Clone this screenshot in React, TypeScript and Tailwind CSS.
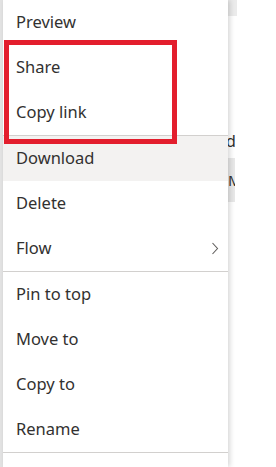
import React from 'react';

const groups = [
  ['Preview', 'Share', 'Copy link'],
  ['Download', 'Delete', 'Flow'],
  ['Pin to top', 'Move to', 'Copy to', 'Rename'],
];

const Chevron = () => (
  <svg width="8" height="13" viewBox="0 0 8 13" fill="none" className="text-[#605e5c]">
    <path d="M1.5 1 L6.5 6.5 L1.5 12" stroke="currentColor" strokeWidth="1.1" />
  </svg>
);

const MenuItem = ({ label }: { label: string }) => (
  <div
    className={
      'h-[45px] flex items-center justify-between pl-[13px] pr-[9px] text-[16.5px] text-[#323130] ' +
      (label === 'Download' ? 'bg-[#f3f2f1]' : '')
    }
  >
    <span>{label}</span>
    {label === 'Flow' && <Chevron />}
  </div>
);

export default function App() {
  return (
    <div
      className="w-[276px] h-[467px] bg-white flex overflow-hidden relative"
      style={{ fontFamily: '"Noto Sans", "Open Sans", sans-serif' }}
    >
      <div className="w-[3px] bg-[#e3e3e3] shrink-0" />

      <div className="w-[225px] shrink-0 bg-white flex flex-col z-10 shadow-[2px_0_5px_rgba(0,0,0,0.16)]">
        {groups.map((g, i) => (
          <div key={i} className="border-b border-[#d2d0ce]">
            {g.map((label) => (
              <MenuItem key={label} label={label} />
            ))}
          </div>
        ))}
      </div>

      <div className="flex-1 flex flex-col text-[16px] text-[#323130]">
        <div className="w-[9px] h-[16px] bg-[#ebebeb]" />
        <div className="h-[112px]" />
        <div className="h-[26px] leading-[26px] -ml-[2px]">d</div>
        <div className="h-[4px]" />
        <div className="w-[8px] h-[44px] bg-[#e8e8e8] flex items-center text-[15px] overflow-hidden -ml-[1px] pl-[1px]">
          M
        </div>
      </div>

      <div className="absolute left-[4px] top-[40px] w-[173px] h-[104px] border-[5px] border-[#e31e2d] z-20" />
    </div>
  );
}
